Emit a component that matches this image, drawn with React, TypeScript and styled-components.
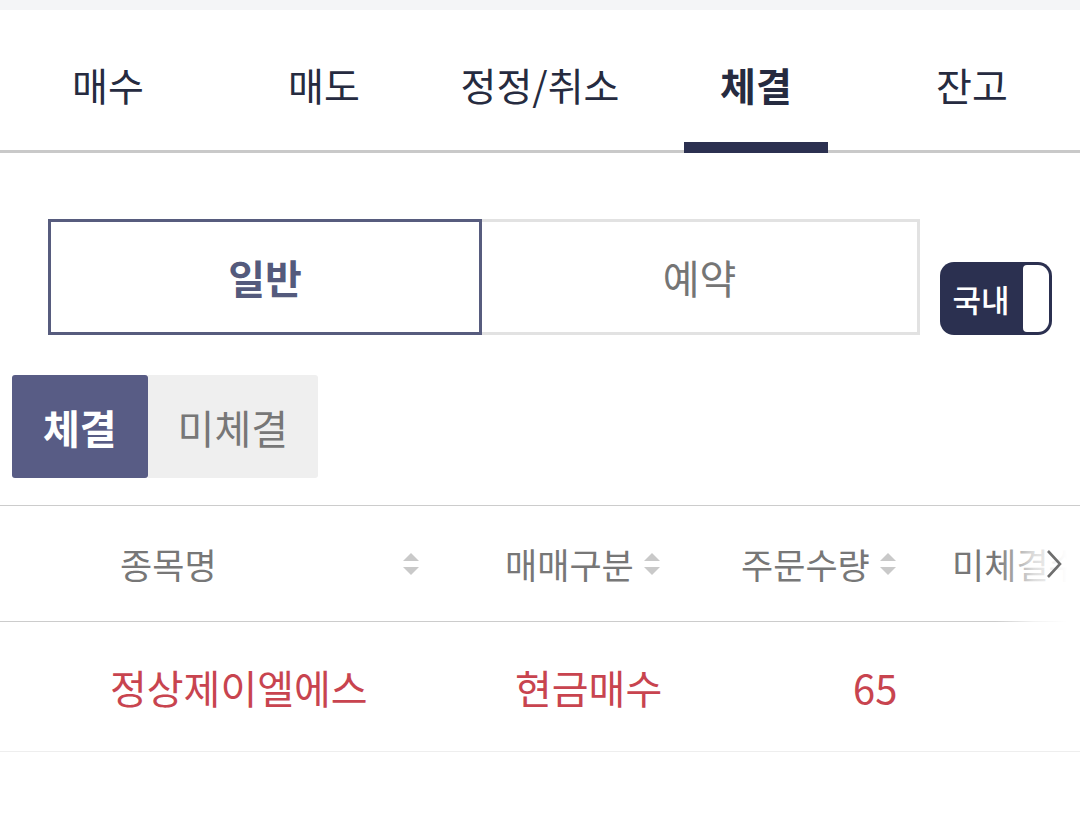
import React from 'react'
import styled, { createGlobalStyle } from 'styled-components'

const GlobalStyle = createGlobalStyle`
  html, body {
    margin: 0;
    padding: 0;
    background: #ffffff;
  }
  body {
    font-family: "Noto Sans CJK KR", "Noto Sans", sans-serif;
  }
`

const tabs = ['매수', '매도', '정정/취소', '체결', '잔고']

const SortIcon: React.FC = () => (
  <svg width="18" height="26" viewBox="0 0 18 26">
    <polygon points="9,2 17,10 1,10" fill="#c9c9c9" />
    <polygon points="1,16 17,16 9,24" fill="#c9c9c9" />
  </svg>
)

const App: React.FC = () => {
  return (
    <Page>
      <GlobalStyle />
      <TopStrip />
      <TabBar>
        {tabs.map((t) => (
          <Tab key={t} $active={t === '체결'}>{t}</Tab>
        ))}
      </TabBar>

      <SegmentRow>
        <Segments>
          <Segment $active>일반</Segment>
          <Segment>예약</Segment>
        </Segments>
        <Toggle>
          <ToggleLabel>국내</ToggleLabel>
          <Knob />
        </Toggle>
      </SegmentRow>

      <SubTabs>
        <SubTab $active>체결</SubTab>
        <SubTab>미체결</SubTab>
      </SubTabs>

      <Table>
        <HeadRow>
          <HeadCell $pl={120}>
            종목명
            <IconPush><SortIcon /></IconPush>
          </HeadCell>
          <HeadCell $pl={65}>
            매매구분
            <SortIcon />
          </HeadCell>
          <HeadCell $pl={41}>
            주문수량
            <SortIcon />
          </HeadCell>
          <HeadCell $pl={22}>미체결수</HeadCell>
        </HeadRow>
        <Fade>
          <svg width="20" height="32" viewBox="0 0 20 32">
            <polyline points="4,3 16,16 4,29" fill="none" stroke="#6e6e6e" strokeWidth="2.6" />
          </svg>
        </Fade>
        <DataRow>
          <DataCell $pl={110}>정상제이엘에스</DataCell>
          <DataCell $pl={75}>현금매수</DataCell>
          <DataCell $pl={153}>65</DataCell>
          <DataCell $pl={0} />
        </DataRow>
      </Table>
    </Page>
  )
}

export default App

const Page = styled.div`
  width: 1080px;
  height: 822px;
  overflow: hidden;
  background: #fff;
`

const TopStrip = styled.div`
  height: 10px;
  background: #f4f5f7;
`

const TabBar = styled.div`
  display: grid;
  grid-template-columns: repeat(5, 1fr);
  height: 140px;
  border-bottom: 3px solid #c9c9c9;
`

const Tab = styled.div<{ $active?: boolean }>`
  position: relative;
  display: flex;
  align-items: center;
  justify-content: center;
  padding-top: 8px;
  font-size: 39px;
  font-weight: ${(p) => (p.$active ? 700 : 400)};
  color: #262b40;
  &::after {
    content: '';
    display: ${(p) => (p.$active ? 'block' : 'none')};
    position: absolute;
    left: 36px;
    right: 36px;
    bottom: -3px;
    height: 11px;
    background: #2b3050;
  }
`

const SegmentRow = styled.div`
  display: flex;
  align-items: flex-end;
  gap: 20px;
  padding: 66px 28px 0 48px;
`

const Segments = styled.div`
  display: flex;
  width: 872px;
`

const Segment = styled.div<{ $active?: boolean }>`
  flex: ${(p) => (p.$active ? '0 0 434px' : '1')};
  height: 116px;
  box-sizing: border-box;
  display: flex;
  align-items: center;
  justify-content: center;
  font-size: 40px;
  font-weight: ${(p) => (p.$active ? 700 : 400)};
  color: ${(p) => (p.$active ? '#545a7c' : '#757575')};
  border: ${(p) => (p.$active ? '3px solid #575c7e' : '3px solid #e2e2e2')};
  border-left-width: ${(p) => (p.$active ? '3px' : '0')};
`

const Toggle = styled.div`
  display: flex;
  width: 112px;
  height: 73px;
  box-sizing: border-box;
  background: #2b3050;
  border-radius: 14px;
  padding: 3px;
`

const ToggleLabel = styled.div`
  flex: 1;
  display: flex;
  align-items: center;
  justify-content: center;
  padding-right: 4px;
  color: #fff;
  font-size: 31px;
  font-weight: 500;
`

const Knob = styled.div`
  width: 26px;
  background: #fff;
  border-radius: 4px 11px 11px 4px;
`

const SubTabs = styled.div`
  display: flex;
  padding: 40px 0 0 12px;
`

const SubTab = styled.div<{ $active?: boolean }>`
  height: 103px;
  padding: 0 ${(p) => (p.$active ? '31px' : '30px')};
  display: flex;
  align-items: center;
  font-size: 40px;
  font-weight: ${(p) => (p.$active ? 700 : 400)};
  color: ${(p) => (p.$active ? '#fff' : '#777')};
  background: ${(p) => (p.$active ? '#585c85' : '#efefef')};
  border-radius: ${(p) => (p.$active ? '3px' : '0 3px 3px 0')};
`

const Table = styled.div`
  position: relative;
  margin-top: 27px;
  border-top: 1px solid #cccccc;
`

const HeadRow = styled.div`
  display: grid;
  grid-template-columns: 440px 260px 230px 150px;
  height: 115px;
  border-bottom: 1px solid #cccccc;
`

const HeadCell = styled.div<{ $pl: number }>`
  display: flex;
  align-items: center;
  gap: 9px;
  padding-left: ${(p) => p.$pl}px;
  padding-right: 20px;
  font-size: 35px;
  color: #777;
  white-space: nowrap;
  overflow: hidden;
`

const IconPush = styled.span`
  margin-left: auto;
  display: flex;
`

const Fade = styled.div`
  position: absolute;
  top: 0;
  right: 0;
  width: 84px;
  height: 116px;
  display: flex;
  align-items: center;
  justify-content: flex-end;
  padding-right: 16px;
  box-sizing: border-box;
  background: linear-gradient(to right, rgba(255, 255, 255, 0), rgba(255, 255, 255, 0.75) 45%, #fff 85%);
`

const DataRow = styled.div`
  display: grid;
  grid-template-columns: 440px 260px 230px 150px;
  height: 129px;
  border-bottom: 1px solid #eeeeee;
`

const DataCell = styled.div<{ $pl: number }>`
  display: flex;
  align-items: center;
  padding-left: ${(p) => p.$pl}px;
  font-size: 40px;
  color: #c8444f;
  white-space: nowrap;
`
